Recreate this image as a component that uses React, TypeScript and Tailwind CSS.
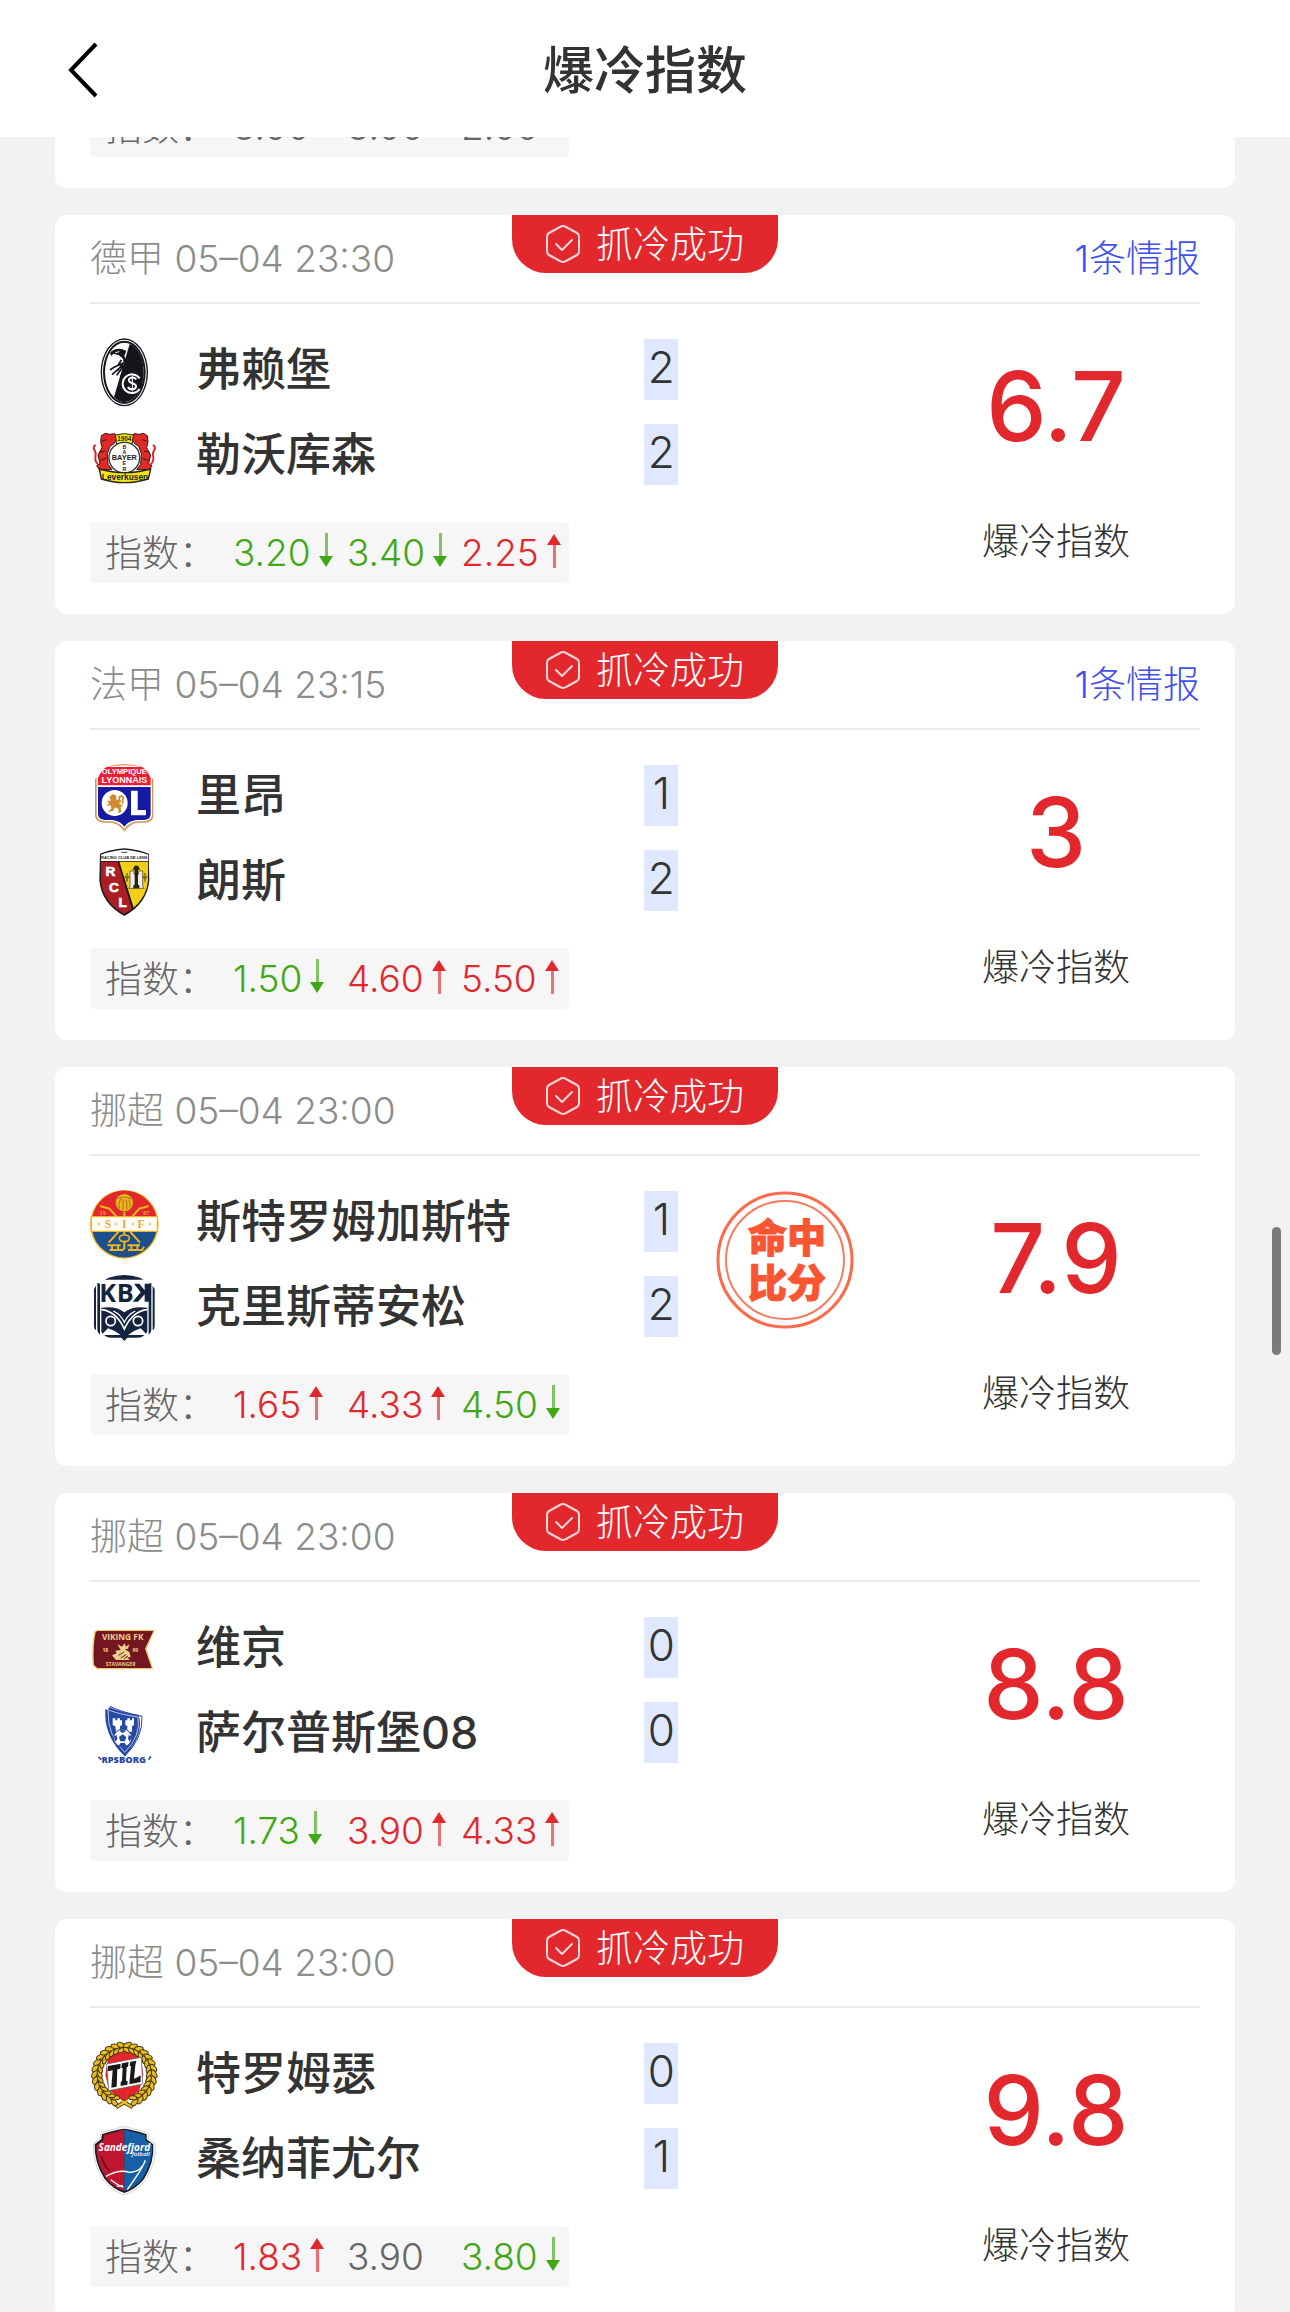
import { ReactNode } from "react";

type Trend = "up" | "down" | "flat";
type Odd = { value: string; trend: Trend };
type Team = { name: string; score: number; crest: ReactNode };
type Match = {
    league: string;
    time: string;
    reports?: string;
    home: Team;
    away: Team;
    odds: Odd[];
    index: string;
    exactScore?: boolean;
};

function Crest({ children }: { children: ReactNode }) {
    return (
        <svg viewBox="0 -18 210 228" className="w-[70px] h-[76px] shrink-0" aria-hidden="true">
            {children}
        </svg>
    );
}

const Freiburg = () => (
    <Crest>
        <ellipse cx="103" cy="103" rx="71" ry="102" fill="#15151b" />
        <ellipse cx="103" cy="103" rx="67" ry="98" fill="#fff" />
        <ellipse cx="103" cy="103" rx="64" ry="95" fill="#15151b" />
        <ellipse cx="103" cy="103" rx="58" ry="89" fill="#fff" />
        <path d="M119 18C145 28 161 62 161 103C161 152 135 192 103 192C92 192 80 186 72 177Z" fill="#15151b" />
        <path d="M60 46C66 34 84 30 98 34L109 39L103 54L109 70L101 76L99 62L87 52L70 47L64 54Z" fill="#15151b" />
        <path d="M94 66L84 82L98 78L82 98M101 74L72 88L60 96M100 80L66 110M101 83L80 112M104 86L92 118M108 84L104 112" fill="none" stroke="#15151b" strokeWidth="5" />
        <path d="M76 44L88 41" stroke="#fff" strokeWidth="3" />
        <circle cx="126" cy="137" r="31" fill="#15151b" />
        <path d="M149 121A28 28 0 1 0 149 153" fill="none" stroke="#fff" strokeWidth="6" />
        <path d="M139 124C130 114 114 119 117 129C120 138 138 134 138 145C137 157 118 156 114 147" fill="none" stroke="#fff" strokeWidth="6" />
        <path d="M127 112V160" stroke="#fff" strokeWidth="3" />
    </Crest>
);

const Leverkusen = () => (
    <Crest>
        <g fill="#e02a26" stroke="#3a1512" strokeWidth="3">
            <path d="M34 38L46 31L58 34L74 32L82 46L72 62L60 70L52 92L54 124L66 140L28 140L20 128L30 122L24 96L36 74L32 56Z" />
            <path d="M172 38L160 31L148 34L132 32L124 46L134 62L146 70L154 92L152 124L140 140L178 140L186 128L176 122L182 96L170 74L174 56Z" />
        </g>
        <path d="M24 124C6 110 24 96 14 82C8 74 12 66 18 68M182 124C200 110 182 96 192 82C198 74 194 66 188 68" fill="none" stroke="#d52b28" strokeWidth="6" />
        <path d="M36 54L50 50M170 54L156 50M28 88L44 84M178 88L162 84M32 112L48 106M174 112L158 106" stroke="#3a1512" strokeWidth="3" />
        <path d="M76 36Q103 28 130 36L126 63Q103 55 80 63Z" fill="#f5e50e" stroke="#222" strokeWidth="3" />
        <circle cx="103" cy="104" r="46" fill="#fff" stroke="#333" strokeWidth="4" />
        <path d="M28 138Q103 160 182 138L175 168Q103 190 34 168Z" fill="#f5e50e" stroke="#222" strokeWidth="4" />
        <g fill="#222" fontFamily="Liberation Sans, sans-serif" fontWeight="700" textAnchor="middle">
            <text x="103" y="54" fontSize="19">1904</text>
            <text x="103" y="111" fontSize="22">BAYER</text>
            <text x="103" y="78" fontSize="16">B</text>
            <text x="103" y="93" fontSize="16">A</text>
            <text x="103" y="127" fontSize="16">E</text>
            <text x="103" y="143" fontSize="16">R</text>
            <text x="105" y="171" fontSize="25">Leverkusen</text>
        </g>
    </Crest>
);

const Lyon = () => (
    <Crest>
        <path d="M50 8Q102 -8 156 8L164 28L190 44V156Q188 174 166 176H140Q116 182 103 202Q90 182 66 176H42Q18 174 15 156V44L42 28Z" fill="#d09a4a" />
        <path d="M50 10Q102 -2 156 10L186 42V154Q184 170 164 172H138Q114 178 103 195Q92 178 68 172H44Q22 170 20 154V42Z" fill="#fff" />
        <path d="M50 9H156Q172 18 182 42V64H24V42Q34 18 50 9Z" fill="#ee1c35" />
        <path d="M24 69H182V152Q180 166 162 168H138Q114 172 103 188Q92 172 68 168H46Q26 166 24 152Z" fill="#1519a4" />
        <circle cx="74" cy="117" r="39" fill="#fff" />
        <path d="M58 98L70 90L80 96L78 106L90 110L88 120L98 124L92 130L94 144L84 148L86 136L76 130L68 142L54 144L64 134L62 124L48 126L58 118L50 110L62 110Z" fill="#cf8b2c" />
        <path d="M92 114C82 100 90 94 98 98C104 104 94 112 98 120" fill="none" stroke="#cf8b2c" strokeWidth="5" />
        <path d="M123 80H143V138H168V154H123Z" fill="#fff" />
        <g fill="#fff" fontFamily="Liberation Sans, sans-serif" fontWeight="700" textAnchor="middle">
            <text x="103" y="31" fontSize="23">OLYMPIQUE</text>
            <text x="103" y="58" fontSize="27">LYONNAIS</text>
        </g>
    </Crest>
);

const Lens = () => (
    <Crest>
        <path d="M30 14Q60 2 103 -2Q146 2 176 14L178 94Q172 164 103 201Q34 164 28 94Z" fill="#1e1a1b" />
        <path d="M33 17Q60 6 103 2Q146 6 174 17V36H33Z" fill="#fff" />
        <path d="M33 38H84L126 180L103 195Q38 160 33 94Z" fill="#ab1e26" />
        <path d="M88 38H174V94Q170 144 131 176Z" fill="#f3cf15" />
        <path d="M85 38L128 178" stroke="#1e1a1b" strokeWidth="4" />
        <path d="M120 66H132V76H146V66H158V112L162 118H116L120 112Z" fill="#f2efe4" stroke="#333" strokeWidth="2" />
        <path d="M134 50H144L150 62H144V108H148V118H130V108H134V62H128Z" fill="#25211c" />
        <path d="M111 72V98M104 82Q111 92 118 82M165 72V98M158 82Q165 92 172 82" fill="none" stroke="#6b5b16" strokeWidth="4" />
        <path d="M94 10H112" stroke="#444" strokeWidth="3" />
        <g fontFamily="Liberation Sans, sans-serif" fontWeight="700" textAnchor="middle">
            <text x="103" y="31" fontSize="12" fill="#222">RACING CLUB DE LENS</text>
            <g fill="#fff" stroke="#fff" strokeWidth="2" fontSize="41">
                <text x="61" y="82">R</text>
                <text x="72" y="128">C</text>
                <text x="98" y="174">L</text>
            </g>
        </g>
    </Crest>
);

const Stromsgodset = () => (
    <Crest>
        <circle cx="103" cy="103" r="103" fill="#f1b51c" />
        <path d="M7 80A98 98 0 0 1 199 80Z" fill="#e3262c" />
        <path d="M7 124A98 98 0 0 0 199 124Z" fill="#1d4f8c" />
        <path d="M30 48L58 56L150 158M176 48L148 56L56 158M103 62V176" fill="none" stroke="#f1b51c" strokeWidth="6" />
        <path d="M4 80H202V124H4Z" fill="#fff" stroke="#f1b51c" strokeWidth="4" />
        <circle cx="103" cy="38" r="27" fill="#f1b51c" stroke="#a95417" strokeWidth="3" />
        <path d="M83 26Q103 16 123 26M88 56Q84 40 92 26M99 60V28M110 60Q112 44 108 28M119 52Q121 40 118 28" fill="none" stroke="#b5651b" strokeWidth="3" />
        <ellipse cx="103" cy="145" rx="15" ry="10" fill="#1d4f8c" stroke="#f1b51c" strokeWidth="5" />
        <path d="M52 166H92M58 180H98L104 172M112 166H150M114 180H156L162 170M66 166V180M84 166V180M124 166V180M142 166V180" fill="none" stroke="#f1b51c" strokeWidth="6" />
        <g fill="#eda91b" fontFamily="Liberation Serif, serif" fontWeight="700" textAnchor="middle">
            <text x="27" y="113" fontSize="35">·</text>
            <text x="54" y="114" fontSize="35">S</text>
            <text x="79" y="113" fontSize="35">·</text>
            <text x="103" y="114" fontSize="35">I</text>
            <text x="128" y="113" fontSize="35">·</text>
            <text x="153" y="114" fontSize="35">F</text>
            <text x="180" y="113" fontSize="35">·</text>
            <text x="38" y="76" fontSize="19">19</text>
            <text x="169" y="76" fontSize="19">07</text>
        </g>
    </Crest>
);

const Kristiansund = () => (
    <Crest>
        <path d="M56 8Q103 -8 150 8L160 14H44ZM22 24V164Q22 172 30 180V26ZM12 42V154Q12 162 18 166V32ZM184 24V164Q184 172 176 180V26ZM194 42V154Q194 162 188 166V32Z" fill="#14243f" />
        <path d="M34 98Q80 92 103 112Q126 92 172 98V170Q162 188 140 188H112L103 198L94 188H66Q44 188 34 170Z" fill="#14243f" />
        <path d="M34 104Q78 108 103 162Q128 108 172 104" fill="none" stroke="#fff" strokeWidth="5" />
        <path d="M70 108Q92 118 103 142Q114 118 136 108" fill="none" stroke="#fff" strokeWidth="4" />
        <circle cx="62" cy="138" r="14" fill="none" stroke="#fff" strokeWidth="5" />
        <circle cx="144" cy="138" r="14" fill="none" stroke="#fff" strokeWidth="5" />
        <path d="M38 176L54 160L74 168L92 180H38ZM168 176L152 160L132 168L114 180H168Z" fill="#fff" />
        <g fill="#14243f" fontFamily="Open Sans, sans-serif" fontWeight="700" fontSize="76">
            <text x="28" y="80">K</text>
            <text x="80" y="80">B</text>
        </g>
        <path d="M178 26V80H164V58L144 80H128L152 52L132 26H148L164 46V26Z" fill="#14243f" />
    </Crest>
);

const Viking = () => (
    <Crest>
        <path d="M20 41H195L170 98L190 160H20L8 148Q4 90 13 46Z" fill="#eaca74" />
        <path d="M22 45H190L165 98L185 156H22L12 146Q8 90 17 49Z" fill="#741620" />
        <path d="M82 84L96 92L104 82L108 92L118 84L114 98L104 100L118 108L122 122L112 126L120 132H78L66 118L80 112L76 104L92 102Z" fill="#ecd08a" />
        <path d="M86 118L102 108M92 126L108 116M102 128L114 120" stroke="#741620" strokeWidth="3" />
        <g fill="#ecd08a" fontFamily="Open Sans, sans-serif" fontWeight="700" textAnchor="middle">
            <text x="98" y="71" fontSize="25">VIKING FK</text>
            <text x="46" y="109" fontSize="15">18</text>
            <text x="136" y="109" fontSize="15">99</text>
            <text x="92" y="151" fontSize="15">STAVANGER</text>
        </g>
    </Crest>
);

const Sarpsborg = () => (
    <Crest>
        <path d="M58 18Q84 32 146 42Q164 100 104 166Q40 104 46 24L54 28Z" fill="#2749a3" />
        <path d="M60 16Q90 32 156 46Q160 110 104 166" fill="none" stroke="#2749a3" strokeWidth="3" />
        <path d="M58 28Q90 40 144 48Q154 104 104 154Q52 104 54 30Z" fill="none" stroke="#fff" strokeWidth="2" />
        <path d="M68 52H76V58H82V52H90V58H96V72L90 76V86L112 86V76L106 72V58H112V52H120V58H126V52H132V72L126 76V92H78L76 76L68 72Z" fill="#fff" />
        <circle cx="98" cy="111" r="27" fill="#fff" stroke="#2749a3" strokeWidth="3" />
        <path d="M98 100L109 108L105 121H91L87 108ZM98 84L108 90L98 96L88 90ZM72 106L80 102L82 114L76 122ZM124 106L116 102L114 114L120 122ZM86 134L92 126H104L110 134L98 138Z" fill="#2749a3" />
        <path d="M25 168L34 176M176 176L182 166" stroke="#2749a3" strokeWidth="5" />
        <text x="101" y="187" fontSize="28" fontWeight="800" fill="#2749a3" textAnchor="middle" fontFamily="Open Sans, sans-serif">RPSBORG</text>
    </Crest>
);

// leaves of the wreath, open at the bottom where the stems cross
const leaves = Array.from({ length: 28 }, (_, i) => -160 + (i * 320) / 27);

const Tromso = () => (
    <Crest>
        <circle cx="103" cy="98" r="70" fill="#fff" />
        <path d="M103 18L152 46L160 98L148 146L103 180L58 146L46 98L54 46Z" fill="#e3262c" />
        <g fill="#e8bd1e" stroke="#3f3312" strokeWidth="3">
            {leaves.map(angle => (
                <g key={angle} transform={`rotate(${angle} 103 98)`}>
                    <ellipse cx="103" cy="9" rx="13" ry="7" transform={`rotate(${angle < 0 ? 28 : -28} 103 9)`} />
                    <ellipse cx="103" cy="24" rx="12" ry="6" transform={`rotate(${angle < 0 ? -24 : 24} 103 24)`} />
                </g>
            ))}
        </g>
        <path d="M78 196L112 176M128 196L94 176" stroke="#3f3312" strokeWidth="12" />
        <path d="M80 195L112 176M126 195L94 176" stroke="#e8bd1e" strokeWidth="7" />
        <path d="M50 66L154 46L158 126L56 146Z" fill="#fff" stroke="#555" strokeWidth="2" />
        <path d="M54 72L92 65L91 80L82 82L80 134L64 137L68 85L53 88ZM96 64L116 60L114 74L110 76L108 116L113 117L112 128L92 132L92 120L96 118L98 78L94 78ZM121 59L139 56L136 70L132 110L142 106L152 100L152 120L118 127L119 114L123 72L119 72Z" fill="#191919" />
    </Crest>
);

const Sandefjord = () => (
    <Crest>
        <path d="M32 19Q50 10 76 6Q103 -8 130 6Q156 10 174 19L176 36L196 50Q200 108 166 160Q140 192 103 204Q66 192 40 160Q8 108 10 50L30 36Z" fill="#fff" stroke="#bbb" strokeWidth="2" />
        <path d="M36 22Q56 14 78 10Q103 0 128 10Q150 14 170 22V37L190 52Q194 106 162 156Q138 186 103 198Q68 186 44 156Q12 106 14 52L34 37Z" fill="#1b1b23" />
        <path d="M41 25Q60 18 80 14Q90 9 103 8V192Q70 182 48 154Q18 106 19 55L40 40Z" fill="#c01531" />
        <path d="M165 25Q146 18 126 14Q116 9 103 8V192Q136 182 158 154Q188 106 187 55L166 40Z" fill="#1860a5" />
        <path d="M48 148Q88 126 118 136Q156 134 166 100Q158 122 134 156L112 188M62 158Q92 180 100 180M80 178L98 176" fill="none" stroke="#fff" strokeWidth="4" />
        <path d="M34 88Q44 122 60 132" fill="none" stroke="#5f0f20" strokeWidth="5" />
        <g fill="#fff" fontFamily="Open Sans, sans-serif" fontStyle="italic" textAnchor="middle">
            <text x="103" y="72" fontSize="30" fontWeight="700">Sandefjord</text>
            <text x="152" y="88" fontSize="18" fontWeight="600">fotball</text>
        </g>
    </Crest>
);

const matches: Match[] = [
    {
        league: "德甲",
        time: "05–04 23:30",
        reports: "1条情报",
        home: { name: "弗赖堡", score: 2, crest: <Freiburg /> },
        away: { name: "勒沃库森", score: 2, crest: <Leverkusen /> },
        odds: [{ value: "3.20", trend: "down" }, { value: "3.40", trend: "down" }, { value: "2.25", trend: "up" }],
        index: "6.7",
    },
    {
        league: "法甲",
        time: "05–04 23:15",
        reports: "1条情报",
        home: { name: "里昂", score: 1, crest: <Lyon /> },
        away: { name: "朗斯", score: 2, crest: <Lens /> },
        odds: [{ value: "1.50", trend: "down" }, { value: "4.60", trend: "up" }, { value: "5.50", trend: "up" }],
        index: "3",
    },
    {
        league: "挪超",
        time: "05–04 23:00",
        home: { name: "斯特罗姆加斯特", score: 1, crest: <Stromsgodset /> },
        away: { name: "克里斯蒂安松", score: 2, crest: <Kristiansund /> },
        odds: [{ value: "1.65", trend: "up" }, { value: "4.33", trend: "up" }, { value: "4.50", trend: "down" }],
        index: "7.9",
        exactScore: true,
    },
    {
        league: "挪超",
        time: "05–04 23:00",
        home: { name: "维京", score: 0, crest: <Viking /> },
        away: { name: "萨尔普斯堡08", score: 0, crest: <Sarpsborg /> },
        odds: [{ value: "1.73", trend: "down" }, { value: "3.90", trend: "up" }, { value: "4.33", trend: "up" }],
        index: "8.8",
    },
    {
        league: "挪超",
        time: "05–04 23:00",
        home: { name: "特罗姆瑟", score: 0, crest: <Tromso /> },
        away: { name: "桑纳菲尤尔", score: 1, crest: <Sandefjord /> },
        odds: [{ value: "1.83", trend: "up" }, { value: "3.90", trend: "flat" }, { value: "3.80", trend: "down" }],
        index: "9.8",
    },
];

const previousOdds: Odd[] = [
    { value: "3.00", trend: "flat" },
    { value: "3.00", trend: "flat" },
    { value: "2.00", trend: "flat" },
];

const trendColor = {
    up: "text-[#e3282d]",
    down: "text-[#41a815]",
    flat: "text-[#666666]",
};

function TrendArrow({ trend }: { trend: Trend }) {
    if (trend === "flat") return null;
    return (
        <svg viewBox="0 0 14 40" className="w-[14px] h-[40px] shrink-0" fill="currentColor" aria-hidden="true">
            {trend === "up" ? (
                <>
                    <path d="M6 11H9V35H6Z" opacity="0.65" />
                    <path d="M7 1L14 12H0Z" />
                </>
            ) : (
                <>
                    <path d="M6 0H9V24H6Z" opacity="0.65" />
                    <path d="M7 34L14 23H0Z" />
                </>
            )}
        </svg>
    );
}

function OddsRow({ odds }: { odds: Odd[] }) {
    return (
        <div className="grid grid-cols-[128px_114px_114px_108px] items-center w-fit h-[61px] pl-[15px] rounded bg-[#f6f6f6] text-[37px] font-light">
            <span className="pt-0.5 text-[#666666]">指数：</span>
            {odds.map((odd, i) => (
                <span key={i} className={`flex items-center gap-2 ${trendColor[odd.trend]}`}>
                    {odd.value}
                    <TrendArrow trend={odd.trend} />
                </span>
            ))}
        </div>
    );
}

function TeamRow({ team }: { team: Team }) {
    return (
        <div className="flex items-center h-[85px]">
            {team.crest}
            <span className="flex-1 ml-9 text-[45px] font-medium">{team.name}</span>
            <span className="w-[34px] h-[61px] bg-[#dfe8ff] text-center text-[44px] leading-[57px] font-light">{team.score}</span>
        </div>
    );
}

function SuccessRibbon() {
    return (
        <div className="absolute top-0 left-1/2 -translate-x-1/2 flex items-center justify-center gap-4 w-[266px] h-[58px] rounded-b-[34px] bg-[#e3282d] text-white text-[37px] font-light">
            <svg viewBox="0 0 34 38" className="w-[34px] h-[38px]" fill="none" stroke="#ffd9d9" strokeWidth="2" strokeLinecap="round" strokeLinejoin="round" aria-hidden="true">
                <path d="M14 2Q17 0 20 2L31 8Q33 9 33 12V26Q33 29 31 30L20 36Q17 38 14 36L3 30Q1 29 1 26V12Q1 9 3 8Z" />
                <path d="M10 19L16 25L26 15" />
            </svg>
            <span>抓冷成功</span>
        </div>
    );
}

function ExactScoreStamp() {
    return (
        <svg viewBox="0 0 138 138" className="w-[138px] h-[138px] ml-[38px]" role="img" aria-label="命中比分">
            <circle cx="69" cy="69" r="67" fill="none" stroke="#fb6b4c" strokeWidth="3" />
            <circle cx="69" cy="69" r="59" fill="none" stroke="#fb7a5e" strokeWidth="2" />
            <g fill="#fa5532" stroke="#fa5532" strokeWidth="1" fontFamily="Liberation Sans, Noto Sans CJK SC, sans-serif" fontSize="39" fontWeight="900" textAnchor="middle">
                <text x="71" y="61">命中</text>
                <text x="71" y="106">比分</text>
            </g>
        </svg>
    );
}

function MatchCard({ match }: { match: Match }) {
    return (
        <article className="relative px-[35px] pb-[31px] rounded-xl bg-white">
            <SuccessRibbon />
            <div className="flex items-center justify-between h-[89px] border-b-2 border-[#ebebeb] text-[37px] font-light">
                <span className="text-[#8c8c8c]">{match.league} {match.time}</span>
                {match.reports && <a href="#reports" className="text-[#3f50ee]">{match.reports}</a>}
            </div>
            <div className="flex">
                <div className="w-[53%] pt-[23px]">
                    <TeamRow team={match.home} />
                    <TeamRow team={match.away} />
                    <div className="mt-[25px]">
                        <OddsRow odds={match.odds} />
                    </div>
                </div>
                <div className="pt-[35px]">{match.exactScore && <ExactScoreStamp />}</div>
                <div className="ml-auto w-[288px] flex flex-col items-center pt-[54px]">
                    <span className="leading-[96px] text-[96px] font-medium text-[#e3282d]">{match.index}</span>
                    <span className="mt-[60px] leading-[56px] text-[37px] font-light">爆冷指数</span>
                </div>
            </div>
        </article>
    );
}

export default function App() {
    return (
        <div className="h-screen overflow-hidden relative bg-[#f2f2f2] text-[#333333] leading-none font-[Inter,'Noto_Sans_CJK_SC',sans-serif]">
            <header className="relative z-10 flex items-center justify-center h-[137px] pt-1 bg-white">
                <button aria-label="返回" className="absolute left-[67px] top-[42px]">
                    <svg viewBox="0 0 32 56" className="w-8 h-14" fill="none" stroke="#000" strokeWidth="4">
                        <path d="M29 2L4 28L29 54" />
                    </svg>
                </button>
                <h1 className="text-[51px] font-medium">爆冷指数</h1>
            </header>
            <main className="flex flex-col gap-[27px] px-[55px] -mt-[41px]">
                <article className="px-[35px] pb-[31px] rounded-b-xl bg-white">
                    <OddsRow odds={previousOdds} />
                </article>
                {matches.map((match, i) => (
                    <MatchCard key={i} match={match} />
                ))}
            </main>
            <div className="absolute right-[9px] top-[1227px] w-[9px] h-[128px] rounded-full bg-[#7a7a7a]" />
        </div>
    );
}
